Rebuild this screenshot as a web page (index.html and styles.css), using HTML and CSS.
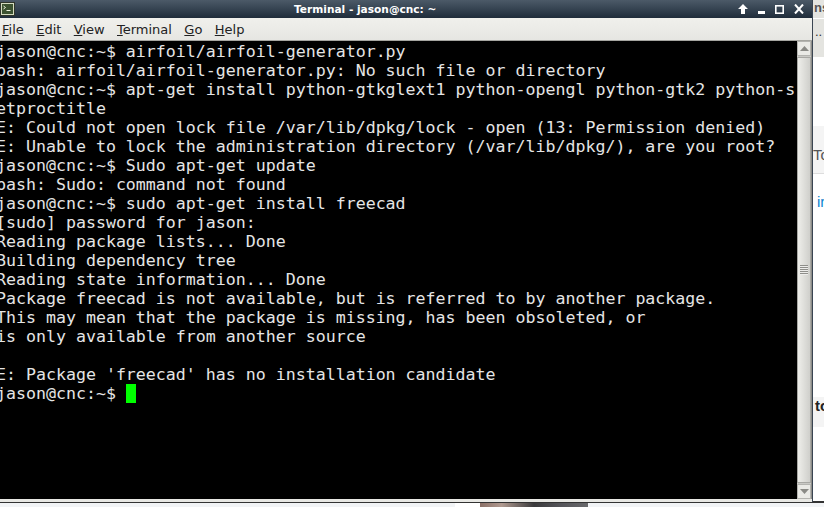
FILE: index.html
```html
<!DOCTYPE html>
<html lang="en">
<head>
<meta charset="utf-8">
<title>Terminal - jason@cnc: ~</title>
<link rel="stylesheet" href="styles.css">
</head>
<body>
<div class="desktop">
  <div class="window">
    <header class="titlebar">
      <svg class="app-icon" width="15" height="14" viewBox="0 0 15 14"><rect x=".5" y=".5" width="14" height="13" fill="#d5dcc0" stroke="#30352a"/><rect x="2" y="2" width="11" height="10" fill="#3c5230"/><path d="M3.500 4l2 1.500-2 1.500M6.500 8.500h4" stroke="#eef3df" fill="none"/></svg>
      <span class="title">Terminal - jason@cnc: ~</span>
      <div class="controls">
        <svg width="10" height="10" viewBox="0 0 10 10"><path d="M5 0l5 5H7v5H3V5H0z" fill="#fff"/></svg>
        <svg width="7" height="10" viewBox="0 0 7 10"><rect x="0" y="7" width="7" height="3" fill="#fff"/></svg>
        <svg width="9" height="9" viewBox="0 0 9 9"><rect x=".8" y=".8" width="7.400" height="7.400" fill="none" stroke="#fff" stroke-width="1.600"/></svg>
        <svg width="10" height="10" viewBox="0 0 10 10"><path d="M1 .5L9 9.500M9 .5L1 9.500" stroke="#fff" stroke-width="2"/></svg>
      </div>
    </header>
    <nav class="menubar">
      <span><u>F</u>ile</span><span><u>E</u>dit</span><span><u>V</u>iew</span><span><u>T</u>erminal</span><span><u>G</u>o</span><span><u>H</u>elp</span>
    </nav>
    <div class="content">
      <div class="terminal"><pre class="buffer">jason@cnc:~$ airfoil/airfoil-generator.py
bash: airfoil/airfoil-generator.py: No such file or directory
jason@cnc:~$ apt-get install python-gtkglext1 python-opengl python-gtk2 python-s
etproctitle
E: Could not open lock file /var/lib/dpkg/lock - open (13: Permission denied)
E: Unable to lock the administration directory (/var/lib/dpkg/), are you root?
jason@cnc:~$ Sudo apt-get update
bash: Sudo: command not found
jason@cnc:~$ sudo apt-get install freecad
[sudo] password for jason:
Reading package lists... Done
Building dependency tree
Reading state information... Done
Package freecad is not available, but is referred to by another package.
This may mean that the package is missing, has been obsoleted, or
is only available from another source

E: Package 'freecad' has no installation candidate
jason@cnc:~$ <span class="cursor"> </span></pre></div>
      <div class="scrollbar">
        <div class="sb-btn"><svg width="9" height="5" viewBox="0 0 9 5"><path d="M4.500 0L9 5H0z" fill="#8a8a86"/></svg></div>
        <div class="sb-thumb"><div class="grip"></div></div>
        <div class="sb-btn"><svg width="9" height="5" viewBox="0 0 9 5"><path d="M0 0h9L4.500 5z" fill="#8a8a86"/></svg></div>
      </div>
    </div>
    <div class="win-foot"></div>
  </div>
  <aside class="behind">
    <div class="b-top">ns</div>
    <div class="b-dots">..</div>
    <div class="b-to">To</div>
    <div class="b-link">ir</div>
    <div class="b-to2">to</div>
  </aside>
</div>
<div class="strip"><div class="strip-white"></div><div class="strip-photo"></div></div>
</body>
</html>
```
FILE: styles.css
```css
* { box-sizing: border-box; }
html, body { margin: 0; padding: 0; width: 824px; height: 507px; overflow: hidden; background: #f2f4f6; }
.desktop { display: flex; height: 502px; }
.window { width: 813px; height: 502px; display: flex; flex-direction: column; background: #e8e8e4; border-right: 1px solid #3a4552; }
.titlebar { height: 18px; flex: none; display: flex; align-items: center; background: linear-gradient(#4c5a68, #1f2c3a); }
.app-icon { flex: none; }
.title { margin-left: 279px; font: bold 10.600px "DejaVu Sans", sans-serif; color: #fff; white-space: nowrap; }
.controls { margin-left: auto; display: flex; align-items: center; gap: 10px; padding-right: 8px; }
.menubar { height: 23px; flex: none; display: flex; gap: 12.400px; align-items: center; padding-left: 2px; background: linear-gradient(#f0f0ec, #e6e6e2); border-bottom: 1px solid #a5a5a0; font: 13px "DejaVu Sans", sans-serif; color: #222; }
.content { height: 458px; flex: none; display: flex; }
.terminal { flex: 1; min-width: 0; background: #000; overflow: hidden; }
.buffer { margin: 0 0 0 -4px; padding-top: 1px; color: #e5e5e5; font: 16.600px/19px "DejaVu Sans Mono", monospace; }
.cursor { display: inline-block; width: 10px; height: 19px; vertical-align: top; background: #00ff00; }
.scrollbar { width: 15px; flex: none; display: flex; flex-direction: column; gap: 1px; background: #c9c9c5; border-right: 1px solid #8e8e8a; }
.sb-btn { height: 15px; display: flex; align-items: center; justify-content: center; background: #eaeae6; border: 1px solid #b4b4b0; flex: none; }
.sb-thumb { flex: 1; display: flex; align-items: center; justify-content: center; background: linear-gradient(90deg, #eeeeea, #cfcfcb); border: 1px solid #a8a8a4; }
.grip { width: 8px; height: 10px; background: repeating-linear-gradient(#8e8e8a 0 1px, #ececea 1px 2px); }
.win-foot { flex: 1; background: #e8e8e4; }
.behind { flex: 1; position: relative; overflow: hidden; font: 15px "Liberation Sans", sans-serif; background: #fff; color: #555; border-bottom: 1px solid #333; }
.b-top, .b-dots, .b-to, .b-to2, .b-link { position: absolute; left: 0; }
.b-top { top: 0; width: 100%; height: 18px; padding-left: 1px; background: #e4e4e0; font-size: 13px; font-weight: bold; line-height: 15px; }
.b-dots { top: 19px; width: 100%; height: 38px; padding: 5px 0 0 2px; background: #e4e4e0; font-size: 13px; color: #333; }
.b-to { top: 126px; width: 100%; height: 48px; padding-top: 20px; background: #f4f4f4; border-bottom: 1px solid #ddd; }
.b-link { top: 193px; left: 4px; color: #0a84d0; }
.b-to2 { top: 397px; width: 100%; height: 30px; padding-left: 2px; background: #f4f4f4; font-weight: bold; color: #222; }
.strip { height: 5px; display: flex; padding-left: 455px; border-top: 1px solid #333; }
.strip-white { width: 25px; background: #fff; }
.strip-photo { width: 108px; background: linear-gradient(90deg, #8a6f66, #b09a90 20%, #3a3a3c 50%, #55555a 75%, #6a6a6c); }
```
